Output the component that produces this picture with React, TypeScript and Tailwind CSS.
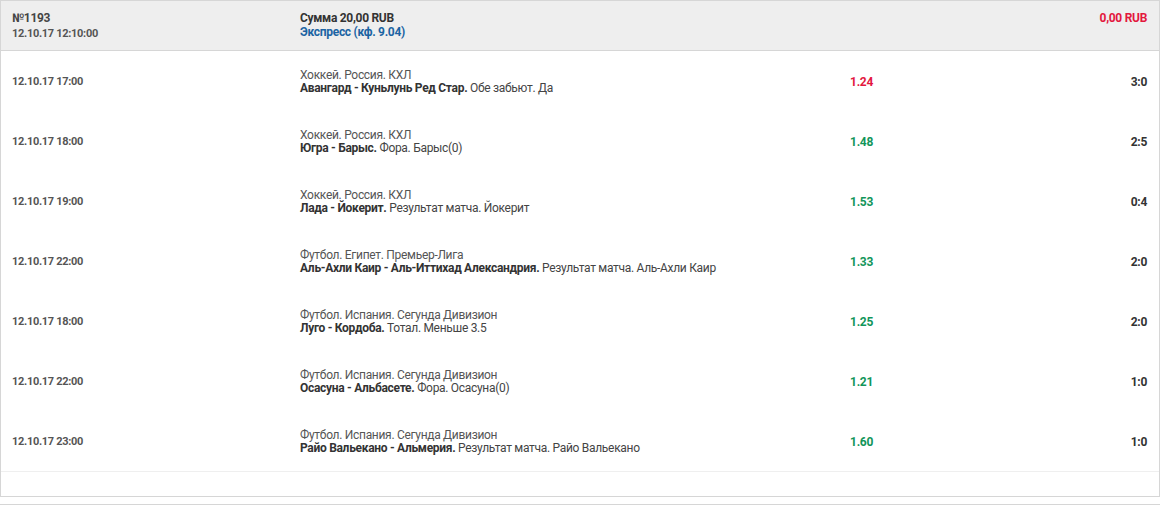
import React from "react";

const rows = [
  { date: "12.10.17 17:00", league: "Хоккей. Россия. КХЛ", teams: "Авангард - Куньлунь Ред Стар.", bet: "Обе забьют. Да", coef: "1.24", lost: true, score: "3:0" },
  { date: "12.10.17 18:00", league: "Хоккей. Россия. КХЛ", teams: "Югра - Барыс.", bet: "Фора. Барыс(0)", coef: "1.48", score: "2:5" },
  { date: "12.10.17 19:00", league: "Хоккей. Россия. КХЛ", teams: "Лада - Йокерит.", bet: "Результат матча. Йокерит", coef: "1.53", score: "0:4" },
  { date: "12.10.17 22:00", league: "Футбол. Египет. Премьер-Лига", teams: "Аль-Ахли Каир - Аль-Иттихад Александрия.", bet: "Результат матча. Аль-Ахли Каир", coef: "1.33", score: "2:0" },
  { date: "12.10.17 18:00", league: "Футбол. Испания. Сегунда Дивизион", teams: "Луго - Кордоба.", bet: "Тотал. Меньше 3.5", coef: "1.25", score: "2:0" },
  { date: "12.10.17 22:00", league: "Футбол. Испания. Сегунда Дивизион", teams: "Осасуна - Альбасете.", bet: "Фора. Осасуна(0)", coef: "1.21", score: "1:0" },
  { date: "12.10.17 23:00", league: "Футбол. Испания. Сегунда Дивизион", teams: "Райо Вальекано - Альмерия.", bet: "Результат матча. Райо Вальекано", coef: "1.60", score: "1:0" },
];

export default function App() {
  return (
    <div className="w-[1161px] bg-white font-['Roboto',sans-serif] text-[12px] tracking-[-0.3px] text-[#444]">
      <div className="w-[1160px] border border-[#d6d6d6]">
        {/* header */}
        <div className="flex h-[50px] items-start border-b border-[#d6d6d6] bg-[#eeeeee] pl-[11px] pr-3 pt-[10px]">
          <div className="w-[288px]">
            <div className="font-bold leading-[14px] text-[#444]">№1193</div>
            <div className="mt-[2px] text-[11px] font-bold leading-[13px] text-[#555]">12.10.17 12:10:00</div>
          </div>
          <div className="flex-1 font-bold leading-[14px]">
            <div className="text-[#333]">Сумма 20,00 RUB</div>
            <div className="text-[#1b64a3]">Экспресс (кф. 9.04)</div>
          </div>
          <div className="font-bold leading-[14px] text-[#e3173e]">0,00 RUB</div>
        </div>

        {/* bets */}
        <div className="border-b border-[#efefef]">
          {rows.map((r, i) => (
            <div key={i} className="flex h-[60px] items-center pl-[11px] pr-3 pt-[2px]">
              <div className="w-[288px] text-[11px] font-bold text-[#555]">{r.date}</div>
              <div className="w-[485px] leading-[13px]">
                <div className="text-[#555]">{r.league}</div>
                <div className="whitespace-nowrap text-[#444]">
                  <span className="font-bold text-[#333]">{r.teams}</span> {r.bet}
                </div>
              </div>
              <div className={`w-[88px] text-right font-bold ${r.lost ? "text-[#e3173e]" : "text-[#12955a]"}`}>
                {r.coef}
              </div>
              <div className="flex-1 text-right font-bold text-[#333]">{r.score}</div>
            </div>
          ))}
        </div>
        <div className="h-[24px]" />
      </div>
      <div className="mt-[7px] w-[1160px] border-t border-[#d6d6d6]" />
    </div>
  );
}
